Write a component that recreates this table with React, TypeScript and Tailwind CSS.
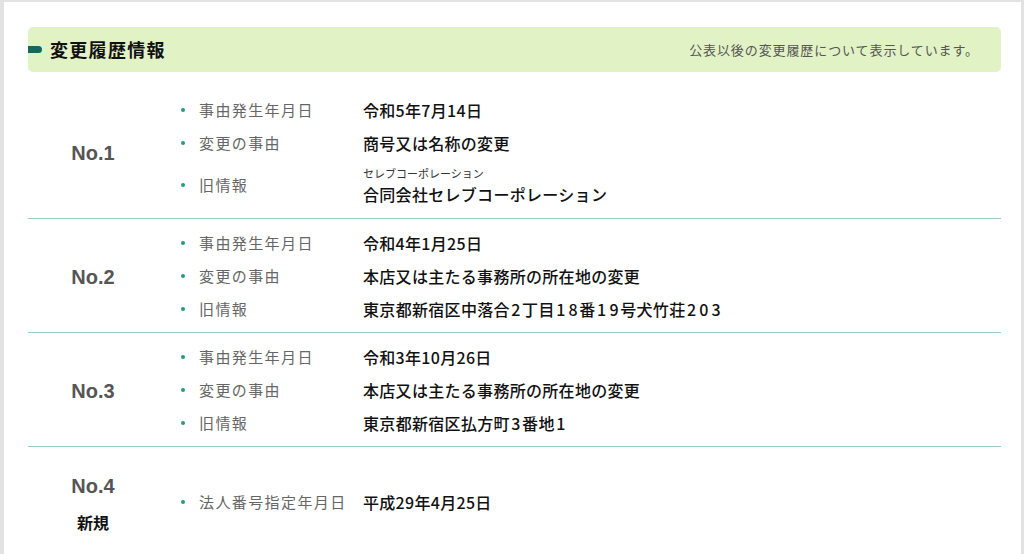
import React from "react";

type Item = { label: string; value: string; kana?: string; wideDigits?: boolean };
type Row = { no: string; items: Item[] };

const rows: Row[] = [
  {
    no: "No.1",
    items: [
      { label: "事由発生年月日", value: "令和5年7月14日" },
      { label: "変更の事由", value: "商号又は名称の変更" },
      { label: "旧情報", value: "合同会社セレブコーポレーション", kana: "セレブコーポレーション" },
    ],
  },
  {
    no: "No.2",
    items: [
      { label: "事由発生年月日", value: "令和4年1月25日" },
      { label: "変更の事由", value: "本店又は主たる事務所の所在地の変更" },
      { label: "旧情報", value: "東京都新宿区中落合2丁目18番19号犬竹荘203", wideDigits: true },
    ],
  },
  {
    no: "No.3",
    items: [
      { label: "事由発生年月日", value: "令和3年10月26日" },
      { label: "変更の事由", value: "本店又は主たる事務所の所在地の変更" },
      { label: "旧情報", value: "東京都新宿区払方町3番地1", wideDigits: true },
    ],
  },
];

const font = { fontFamily: '"Noto Sans CJK JP", "Noto Sans", sans-serif' };

function Value({ text, wide }: { text: string; wide?: boolean }) {
  if (!wide) return <>{text}</>;
  return (
    <>
      {Array.from(text).map((ch, i) =>
        /[0-9]/.test(ch) ? (
          <span key={i} className="inline-block w-[12.3px] text-center">
            {ch}
          </span>
        ) : (
          <React.Fragment key={i}>{ch}</React.Fragment>
        )
      )}
    </>
  );
}

function ItemLine({ item }: { item: Item }) {
  return (
    <div className="flex items-center min-h-[33px]">
      <div className="flex items-center w-[183px] shrink-0">
        <span className="ml-[1px] w-[4px] h-[4px] rounded-full bg-[#2a9a7c]" />
        <span className="ml-[14px] text-[15px] tracking-[1.4px] text-[#666666] leading-[24px]">
          {item.label}
        </span>
      </div>
      {item.kana ? (
        <div className="flex flex-col py-[5px]">
          <span className="text-[11px] leading-[18px] text-[#333333]">{item.kana}</span>
          <span className="text-[16px] leading-[24px] font-medium text-[#111111] tracking-[0.3px]">
            {item.value}
          </span>
        </div>
      ) : (
        <span className="text-[16px] leading-[24px] font-medium text-[#111111] tracking-[0.3px]">
          <Value text={item.value} wide={item.wideDigits} />
        </span>
      )}
    </div>
  );
}

export default function App() {
  return (
    <div className="w-[1024px] h-[554px] overflow-hidden bg-white" style={font}>
      <div className="h-full border-l-4 border-t-2 border-r-[3px] border-[#e2e2e2] pt-[25px] pl-6 pr-5">
        <div className="flex items-center justify-between h-[45px] rounded-[5px] bg-[#e1f2c5]">
          <div className="flex items-center">
            <span className="w-[14px] h-[7px] rounded-r-full bg-[#17675e]" />
            <span className="ml-2 text-[18px] font-bold text-[#111111] tracking-[1.3px]">変更履歴情報</span>
          </div>
          <span className="mr-[22px] text-[13px] tracking-[0.9px] text-[#555555]">
            公表以後の変更履歴について表示しています。
          </span>
        </div>

        <div className="mt-[14px]">
          {rows.map((r) => (
            <div key={r.no} className="flex items-center border-b border-[#94cfc2] py-[7px]">
              <div className="w-[130px] shrink-0 flex justify-center pt-[2px]">
                <span
                  className="text-[20px] font-bold text-[#555555]"
                  style={{ fontFamily: '"Liberation Sans", Arial, sans-serif' }}
                >
                  {r.no}
                </span>
              </div>
              <div className="pl-[22px] flex flex-col">
                {r.items.map((it) => (
                  <ItemLine key={it.label} item={it} />
                ))}
              </div>
            </div>
          ))}
          <div className="flex items-center pt-[22px] pb-[20px]">
            <div className="w-[130px] shrink-0 flex flex-col items-center">
              <span
                className="text-[20px] leading-[30px] font-bold text-[#555555] pt-[2px]"
                style={{ fontFamily: '"Liberation Sans", Arial, sans-serif' }}
              >
                No.4
              </span>
              <span className="mt-[9px] text-[16px] leading-[24px] font-bold text-[#111111]">新規</span>
            </div>
            <div className="pl-[22px] flex flex-col">
              <ItemLine item={{ label: "法人番号指定年月日", value: "平成29年4月25日" }} />
            </div>
          </div>
        </div>
      </div>
    </div>
  );
}
